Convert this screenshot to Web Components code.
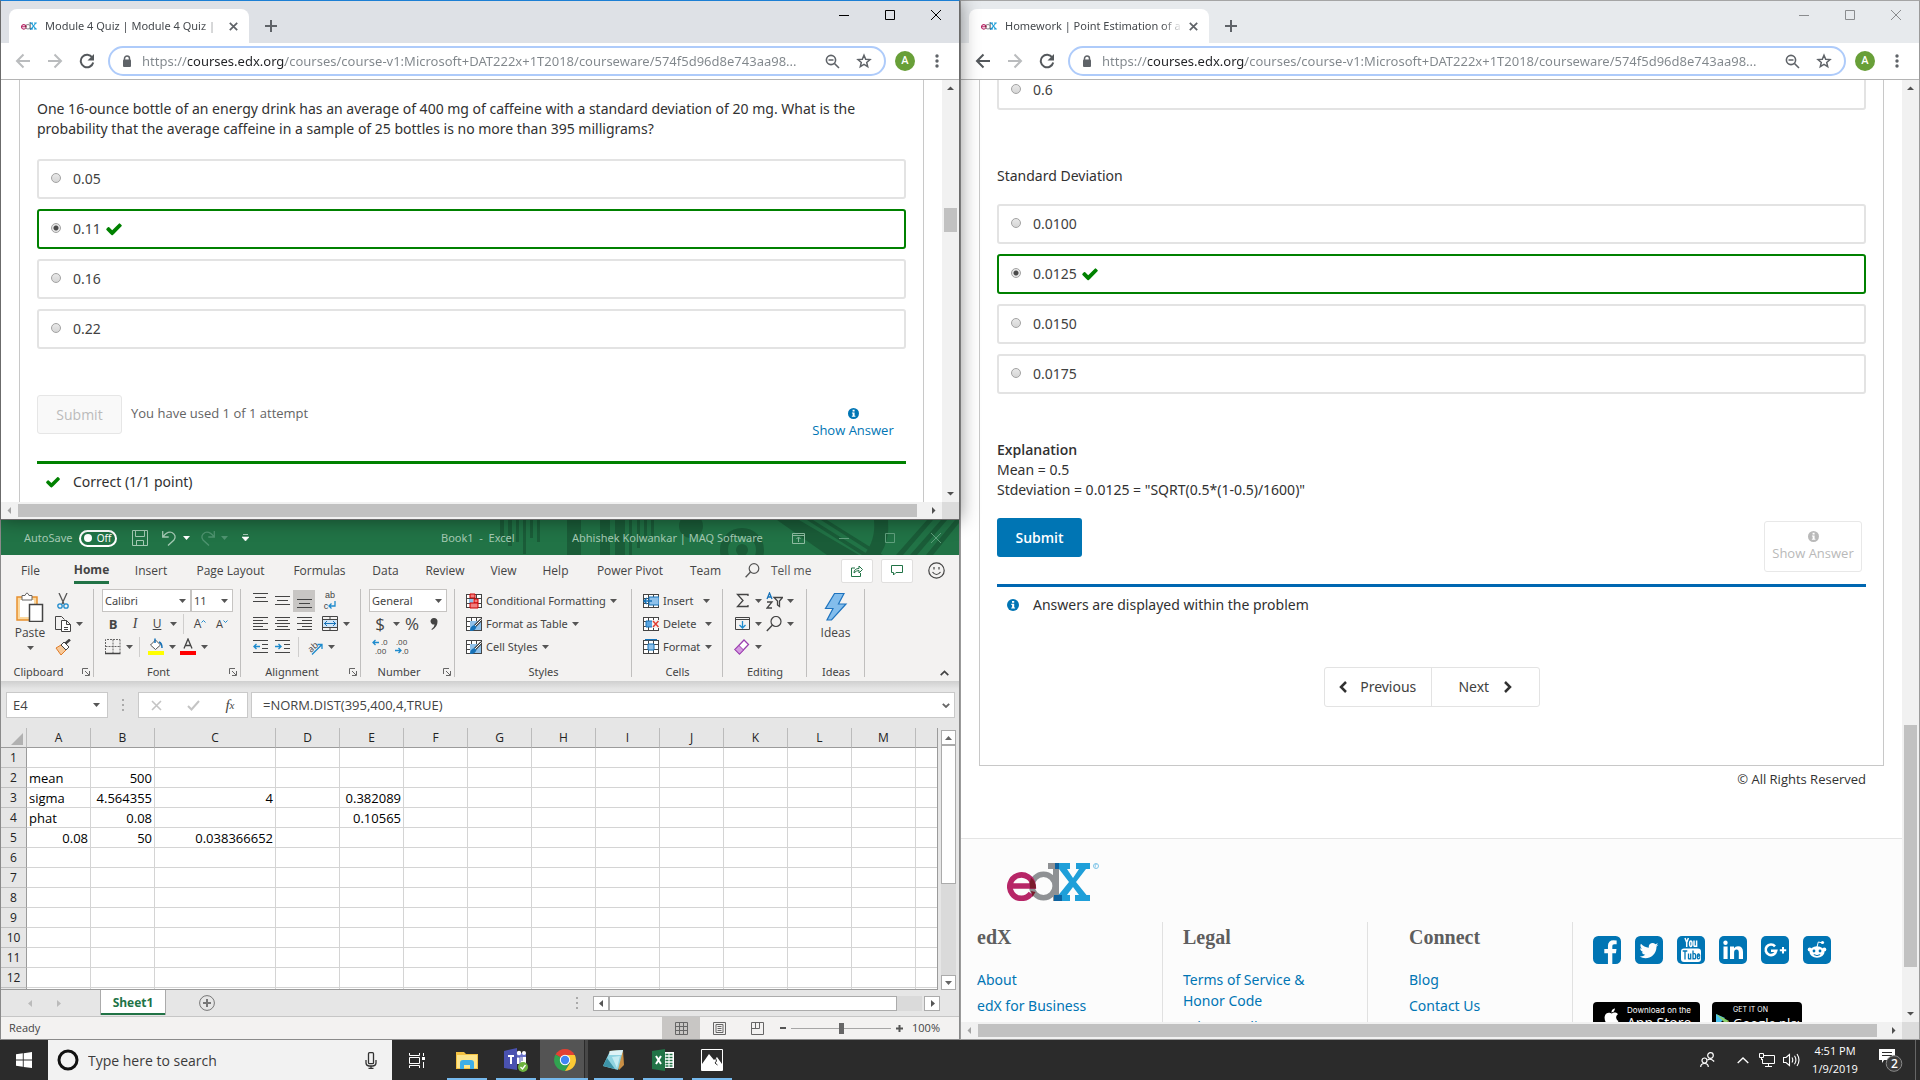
<!DOCTYPE html>
<html lang="en">
<head>
<meta charset="utf-8">
<title>Desktop</title>
<style>
html,body{margin:0;height:100%}
body{background:#1d3a52;font-family:"Open Sans","Noto Sans",sans-serif;overflow:hidden}
</style>
</head>
<body>
<desk-top>
  <chrome-window slot="nw" active heading="Module 4 Quiz | Module 4 Quiz |" vbar="111,24,253" hbar="0,899,8">
    <quiz-page></quiz-page>
  </chrome-window>
  <excel-window slot="sw"></excel-window>
  <chrome-window slot="e" canback heading="Homework | Point Estimation of a" vbar="628,242,38" hbar="0,899,8">
    <homework-page></homework-page>
  </chrome-window>
  <task-bar slot="bar"></task-bar>
</desk-top>
<script>
const svg = (w, h, body, extra = '') => `<svg width="${w}" height="${h}" viewBox="0 0 ${w} ${h}" fill="none" aria-hidden="true" ${extra}>${body}</svg>`;
const base = `<style>
*,:host{box-sizing:border-box}
:host{display:block;min-width:0}
button{font:inherit;color:inherit;border:0;background:none;padding:0;margin:0;display:flex;align-items:center;justify-content:center;flex:none}
input,select{font:inherit;color:inherit;margin:0;padding:0;border:0;background:none;outline:0;border-radius:0}
svg{display:block;flex:none}
a{text-decoration:none}
p,h2,h3,ul{margin:0;padding:0;list-style:none}
</style>`;
const define = (name, html) => customElements.define(name, class extends HTMLElement {
  connectedCallback() {
    if (this.shadowRoot) return;
    const t = document.createElement('template');
    t.innerHTML = base + (typeof html === 'function' ? html(this) : html);
    this.attachShadow({mode: 'open'}).append(t.content.cloneNode(true));
  }
});

const CHECK = 'M1671 566q0 40-28 68l-724 724-136 136q-28 28-68 28t-68-28l-136-136-362-362q-28-28-28-68t28-68l136-136q28-28 68-28t68 28l294 295 656-657q28-28 68-28t68 28l136 136q28 28 28 68z';
const check = s => `<svg width="${s}" height="${s}" viewBox="0 0 1792 1792" fill="#008100" aria-hidden="true"><path d="${CHECK}"/></svg>`;
const info = (s = 12) => `<svg width="${s}" height="${s}" viewBox="0 0 12 12" aria-hidden="true"><circle cx="6" cy="6" r="6" fill="currentColor"/><path d="M5 2h2.2v1.8H5zM4.3 4.8h2.9v3.6h.9v1.2H4.2V8.4h.9V6h-.8z" fill="#fff"/></svg>`;
const edx = (w, h, reg) => `<svg width="${w}" height="${h}" viewBox="0 0 ${reg ? 92 : 84} 38" fill="none" role="img" aria-label="edX">
<circle cx="36.5" cy="23" r="11.7" stroke="#8f9194" stroke-width="5.6"/>
<path d="M41 0h11v38h-6V6h-5z" fill="#8f9194"/>
<path d="M48 0h15v6h-3l6 9 6-9h-3V0h14v6h-4L69 19l10.500 13H83v6H68v-6h4l-6-8-6 8h3v6H47v-6h4.500L62 19 52 6h-4z" fill="#1f9fd9"/>
<path d="M48 0h4v6h-4zM47 32h8v6h-8z" fill="#0e63a0"/>
<path d="M3.500 23H26.200A11.700 11.700 0 1 0 24 30.500" stroke="#b72667" stroke-width="5.600"/>
<path d="M24 14.500q5 4 5 11H23q-1-6 1-11zM24 28l4.500 1-3 5z" fill="#7a1c2c"/>
${reg ? '<circle cx="89" cy="3" r="2.500" stroke="#7cc4e8"/><path d="M88.300 4.500v-3h1.400" stroke="#7cc4e8" stroke-width=".8"/>' : ''}</svg>`;

/* ---------- Desktop ---------- */
define('desk-top', `<style>
:host{height:100vh;display:grid;grid-template:1fr 1fr 40px / 1fr 1fr}
slot{display:block;min-width:0;min-height:0}
::slotted(*){height:100%}
slot[name=nw]{grid-area:1/1;z-index:3;box-shadow:0 0 18px rgba(0,0,0,.45)}
slot[name=sw]{grid-area:2/1;z-index:2}
slot[name=e]{grid-area:1/2/3/3}
slot[name=bar]{grid-area:3/1/4/3;z-index:4}
</style><slot name="nw"></slot><slot name="sw"></slot><slot name="e"></slot><slot name="bar"></slot>`);

/* ---------- Scroll bar of a browser page ---------- */
define('scroll-bar', el => {
  const v = el.hasAttribute('vertical');
  const [a, b, c] = el.getAttribute('parts').split(',');
  const tri = (d, f) => `<button aria-label="Scroll">${svg(7, 7, `<path d="${d}" fill="${f}"/>`)}</button>`;
  return `<style>
:host{display:flex;flex-direction:${v ? 'column' : 'row'};background:#f1f1f1;${v ? 'width' : 'height'}:17px}
button{width:17px;height:17px}
i{background:#c1c1c1;margin:${v ? '0 2px' : '2px 0'}}
</style>${v ? tri('M0 5h7L3.500 1.500z', '#505050') : tri('M5 0v7L1.500 3.500z', '#a3a3a3')}
<span style="flex:${a} 0 0"></span><i style="flex:${b} 0 0"></i><span style="flex:${c} 0 0"></span>
${v ? tri('M0 2h7L3.500 5.500z', '#505050') : tri('M2 0v7L5.500 3.500z', '#505050')}`;
});

/* ---------- Browser window ---------- */
define('chrome-window', el => {
  const on = el.hasAttribute('active');
  const back = el.hasAttribute('canback');
  const arrow = (c, d) => svg(16, 16, `<path d="${d}" stroke="${c}" stroke-width="2"/>`);
  return `<style>
:host{display:flex;flex-direction:column;background:#fff;border:1px solid ${on ? '#6b6b6b' : '#9b9b9b'};border-top-color:${on ? '#1c7fd4' : '#a5a5a5'}}
.title{height:42px;background:${on ? '#dee1e6' : '#e7eaed'};display:flex;padding:8px 0 0 8px;flex:none}
.tab{width:240px;height:34px;background:#fff;border-radius:8px 8px 0 0;display:flex;align-items:center;padding:0 11px 0 12px;color:#45494d;font:11px/18px "Noto Sans",sans-serif}
.tab b{font-weight:400;flex:1;margin:0 6px 0 8px;overflow:hidden;white-space:nowrap;-webkit-mask-image:linear-gradient(90deg,#000 88%,transparent)}
.plus{width:44px;height:34px}
.win{margin-left:auto;display:flex;margin-top:-8px;height:28px}
.win button{width:46px}
.tools{height:36px;display:flex;align-items:center;padding:0 6px;flex:none}
.tools>button{width:32px;height:32px}
.box{flex:1;height:30px;margin:0 9px 0 5px;border:2px solid #aecbfa;border-radius:15px;display:flex;align-items:center;padding:0 4px 0 12px}
.box input{flex:1;min-width:0;font:13px/20px "Noto Sans",sans-serif;margin-left:10px;color:#7b7f84;background:linear-gradient(90deg,#80868b 46px,#202124 46px 143px,#80868b 143px);-webkit-background-clip:text;background-clip:text;-webkit-text-fill-color:transparent}
.box button{width:32px;height:26px}
.tools .av{width:20px;height:20px;border-radius:50%;background:#689f38;color:#fff;font:500 11px/20px Roboto,sans-serif;margin-right:6px}
.page{flex:1;min-height:0;border-top:1px solid #b4b4b4;display:grid;grid-template:1fr 17px / 1fr 17px}
.view{overflow:hidden;min-height:0;min-width:0}
.corner{background:#dcdcdc}
</style>
<div class="title"><div class="tab">${edx(16, 8)}<b>${el.getAttribute('heading')}</b><button aria-label="Close tab">${svg(9, 9, '<path d="M.8.8l7.400 7.400M8.200.8L.8 8.200" stroke="#5f6368" stroke-width="1.700"/>')}</button></div>
<button class="plus" aria-label="New tab">${svg(12, 12, '<path d="M6 0v12M0 6h12" stroke="#5f6368" stroke-width="2"/>')}</button>
<div class="win" style="color:${on ? '#000' : '#8a8c8e'}"><button aria-label="Minimize">${svg(10, 10, '<path d="M0 5.500h10" stroke="currentColor"/>')}</button><button aria-label="Maximize">${svg(10, 10, '<path d="M.5.5h9v9h-9z" stroke="currentColor"/>')}</button><button aria-label="Close">${svg(10, 10, '<path d="M0 0l10 10M10 0L0 10" stroke="currentColor"/>')}</button></div></div>
<div class="tools">
<button aria-label="Back">${arrow(back ? '#54585c' : '#babcbe', 'M15 8H2.500M8.500 1.500L2 8l6.500 6.500')}</button>
<button aria-label="Forward">${arrow('#babcbe', 'M1 8h12.500M7.500 1.500L14 8l-6.500 6.500')}</button>
<button aria-label="Reload">${svg(16, 16, '<path d="M13.300 4.500A6.300 6.300 0 1 0 14.200 9.500" stroke="#54585c" stroke-width="2"/><path d="M15 1v6.500H8.500z" fill="#54585c"/>')}</button>
<div class="box">${svg(10, 13, '<path d="M2.500 6V3.500a2.500 2.500 0 0 1 5 0V6" stroke="#5f6368" stroke-width="1.500"/><rect x="1" y="4.500" width="8" height="7.500" rx="1" fill="#5f6368"/>')}
<input type="text" aria-label="Address" value="https://courses.edx.org/courses/course-v1:Microsoft+DAT222x+1T2018/courseware/574f5d96d8e743aa98...">
<button aria-label="Zoom">${svg(15, 15, '<circle cx="6" cy="6" r="4.600" stroke="#5f6368" stroke-width="1.600"/><path d="M3.500 6h5M9.500 9.500l4.500 4.500" stroke="#5f6368" stroke-width="1.600"/>')}</button>
<button aria-label="Bookmark">${svg(16, 16, '<path d="M8 2.200l1.700 4 4.300.4-3.300 2.800 1 4.200L8 11.400l-3.700 2.200 1-4.200L2 6.600l4.300-.4z" stroke="#5f6368" stroke-width="1.500"/>')}</button></div>
<button class="av" aria-label="Profile">A</button>
<button aria-label="Menu">${svg(4, 14, '<g fill="#5f6368"><circle cx="2" cy="2" r="1.700"/><circle cx="2" cy="7" r="1.700"/><circle cx="2" cy="12" r="1.700"/></g>')}</button></div>
<div class="page"><div class="view"><slot></slot></div><scroll-bar vertical parts="${el.getAttribute('vbar')}"></scroll-bar><scroll-bar parts="${el.getAttribute('hbar')}"></scroll-bar><div class="corner"></div></div>`;
});

/* ---------- Course page parts ---------- */
define('choice-item', el => {
  const on = el.hasAttribute('correct');
  return `<style>
label{display:flex;align-items:center;height:40px;border:2px solid ${on ? '#008100' : '#e3e3e3'};border-radius:3px;padding:0 12px;font-size:14px;line-height:20px;color:#414141}
input{appearance:none;width:10px;height:10px;border:1px solid #a2a2a2;border-radius:50%;background:${on ? 'radial-gradient(circle,#4a4a4a 2px,#e6e6e6 3px)' : 'linear-gradient(#e8e8e8,#d6d6d6)'};margin:0 12px 2px 0}
svg{margin-left:4px}
</style><label><input type="radio" name="c"${on ? ' checked' : ''}><slot></slot>${on ? check(18) : ''}</label>`;
});
define('submit-row', el => {
  const off = el.hasAttribute('used');
  return `<style>
:host{display:flex;align-items:flex-start;margin-bottom:12px;padding-right:4px;font-family:"Open Sans",sans-serif}
.s{width:85px;height:39px;border-radius:3px;font-size:14px;${off ? 'background:#f9f9f9;border:1px solid #e6e6e6;color:#bbb' : 'background:#0075b4;color:#fff;font-weight:600'}}
p{font-size:13px;line-height:20px;color:#646464;margin:8px 0 0 9px}
.a{margin:3px 0 0 auto;width:98px;height:51px;flex-direction:column;gap:2px;border-radius:3px;font-size:13px;line-height:18px;border:1px solid ${off ? 'transparent' : '#e8e8e8'};color:${off ? '#0075b4' : '#b9b9b9'}}
</style><button class="s"${off ? ' disabled' : ''}>Submit</button><p><slot></slot></p><button class="a">${info(11)}<span>Show Answer</span></button>`;
});
define('status-line', el => `<style>
:host{border-top:3px solid ${el.getAttribute('color')}}
p{display:flex;align-items:center;gap:12px;padding:8px 0 0 8px;font-size:14px;line-height:20px;color:#313131}
span{width:16px;display:grid;place-items:center;color:#0075b4}
</style><p><span>${el.hasAttribute('ok') ? check(16) : info(12)}</span><slot></slot></p>`);

define('quiz-page', `<style>
:host{height:100%;font-family:"Noto Sans",sans-serif}
section{margin:0 18px;height:100%;border:solid #c8c8c8;border-width:0 1px;padding:19px 17px 0;color:#313131;font-size:14px;line-height:20px}
.list{display:grid;gap:10px;margin:20px 0 46px}
submit-row{margin-bottom:12px}
</style><section>
<p>One 16-ounce bottle of an energy drink has an average of 400 mg of caffeine with a standard deviation of 20 mg. What is the probability that the average caffeine in a sample of 25 bottles is no more than 395 milligrams?</p>
<div class="list"><choice-item>0.05</choice-item><choice-item correct>0.11</choice-item><choice-item>0.16</choice-item><choice-item>0.22</choice-item></div>
<submit-row used>You have used 1 of 1 attempt</submit-row>
<status-line color="#008100" ok>Correct (1/1 point)</status-line>
</section>`);

define('homework-page', `<style>
:host{font-family:"Noto Sans",sans-serif}
section{margin:-10px 18px 0;border:1px solid #c8c8c8;border-top:0;padding:0 17px 58px;color:#313131;font-size:14px;line-height:20px}
.list{display:grid;gap:10px;margin:18px 0 46px}
h2{font-size:14px;font-weight:400;margin-top:56px}
b{font:600 14px "Open Sans",sans-serif}
submit-row{margin-top:18px}
nav{display:flex;width:216px;height:40px;margin:52px auto 0;border:1px solid #e3e3e3;border-radius:3px}
nav button{flex:1;gap:13px;color:#414141}
nav button+button{border-left:1px solid #e3e3e3;gap:15px}
.r{font:13px/20px "Open Sans",sans-serif;color:#313131;text-align:right;margin:3px 36px 49px 0}
</style><section>
<choice-item>0.6</choice-item>
<h2>Standard Deviation</h2>
<div class="list"><choice-item>0.0100</choice-item><choice-item correct>0.0125</choice-item><choice-item>0.0150</choice-item><choice-item>0.0175</choice-item></div>
<p><b>Explanation</b></p><p>Mean = 0.5</p><p>Stdeviation = 0.0125 = "SQRT(0.5*(1-0.5)/1600)"</p>
<submit-row></submit-row>
<status-line color="#0067b1">Answers are displayed within the problem</status-line>
<nav><button>${svg(8, 12, '<path d="M7 1L2 6l5 5" stroke="#313131" stroke-width="2.500"/>')}Previous</button><button>Next${svg(8, 12, '<path d="M1 1l5 5-5 5" stroke="#313131" stroke-width="2.500"/>')}</button></nav>
</section>
<p class="r">© All Rights Reserved</p>
<edx-footer></edx-footer>`);

const SQ = 'M1664 416v960q0 119-84.500 203.500t-203.500 84.500h-960q-119 0-203.500-84.500t-84.500-203.500v-960q0-119 84.500-203.500t203.500-84.500h960q119 0 203.500 84.500t84.500 203.500z';
const fa = d => `<svg width="28" height="28" viewBox="128 128 1536 1536" fill="#0075b4" fill-rule="evenodd" aria-hidden="true"><path d="${d}"/></svg>`;
const soc = body => svg(28, 28, `<rect width="28" height="28" rx="5" fill="#0075b4"/>${body}`);
const FB = 'M1376 128q119 0 203.5 84.5t84.5 203.5v960q0 119-84.5 203.5t-203.5 84.5h-188v-595h199l30-232h-229v-148q0-56 23.5-84t91.5-28l122-1v-207q-63-9-178-9-136 0-217.5 80t-81.5 226v171h-200v232h200v595h-532q-119 0-203.5-84.5t-84.5-203.5v-960q0-119 84.5-203.5t203.5-84.5h960z';
const TW = 'M1408 610q-56 25-121 34 68-40 93-117-65 38-134 51-61-66-153-66-87 0-148.5 61.5t-61.5 148.5q0 29 5 48-129-7-242-65t-192-155q-29 50-29 106 0 114 91 175-47-1-100-26v2q0 75 50 133.5t123 72.5q-29 8-51 8-13 0-39-4 21 63 74.5 104t121.5 42q-116 90-261 90-26 0-50-3 148 94 322 94 112 0 210-35.5t168-95 120.5-137 75-162 24.5-168.5q0-18-1-27 63-45 105-109z' + SQ;
const APPLE = 'M12.152 6.896c-.948 0-2.415-1.078-3.96-1.04-2.04.027-3.91 1.183-4.961 3.014-2.117 3.675-.546 9.103 1.519 12.09 1.013 1.454 2.208 3.09 3.792 3.039 1.52-.065 2.09-.987 3.935-.987 1.831 0 2.35.987 3.96.948 1.637-.026 2.676-1.48 3.676-2.948 1.156-1.688 1.636-3.325 1.662-3.415-.039-.013-3.182-1.221-3.22-4.857-.026-3.04 2.48-4.494 2.597-4.559-1.429-2.09-3.623-2.324-4.39-2.376-2-.156-3.675 1.09-4.61 1.09zM15.53 3.83c.843-1.012 1.4-2.427 1.245-3.83-1.207.052-2.662.805-3.532 1.818-.78.896-1.454 2.338-1.273 3.714 1.338.104 2.715-.688 3.559-1.701';
define('edx-footer', `<style>
footer{border-top:1px solid #e4e4e4;background:#fcfcfc;padding-top:24px}
.logo{display:block;padding-left:46px;margin-bottom:21px}
.cols{display:grid;grid-template-columns:202px 205px 205px 1fr;height:150px}
.cols>div{padding:3px 20px 0 41px;border-right:1px solid #e1e1e1}
.cols>div:nth-child(1){padding-left:16px}.cols>div:nth-child(2){padding-left:20px}
.cols>div:last-child{border:0;padding:14px 0 0 20px}
h3{font:bold 20px/24px "Liberation Serif",serif;color:#5e5e5e;margin-bottom:20px}
ul{display:grid;gap:5px;font-size:14px;line-height:21px}
li a{color:#0075b4}
.soc,.st{display:flex;gap:14px}
.st{gap:12px;margin-top:38px}
.st a{height:31px;border-radius:4px;background:#000;color:#fff;display:flex;gap:7px;padding:3px 0 0 10px;font:8px/10px Inter,sans-serif;white-space:nowrap}
.st a span{display:block}
.st a b{display:block;font:500 14px/16px "Open Sans",sans-serif}
</style><footer><a class="logo" href="#">${edx(92, 38, true)}</a><div class="cols">
<div><h3>edX</h3><ul><li><a href="#">About</a></li><li><a href="#">edX for Business</a></li></ul></div>
<div><h3>Legal</h3><ul><li><a href="#">Terms of Service &amp; Honor Code</a></li><li><a href="#">Privacy Policy</a></li></ul></div>
<div><h3>Connect</h3><ul><li><a href="#">Blog</a></li><li><a href="#">Contact Us</a></li></ul></div>
<div><div class="soc"><a href="#" aria-label="Facebook">${fa(FB)}</a><a href="#" aria-label="Twitter">${fa(TW)}</a>
<a href="#" aria-label="YouTube">${soc('<rect x="4" y="12.500" width="20" height="13.500" rx="3" fill="#fff"/><g fill="none" stroke-width="1.500"><path d="M8 2l1.700 4.500L11.400 2M9.700 6v5" stroke="#fff"/><ellipse cx="13.800" cy="7.700" rx="1.200" ry="2.700" stroke="#fff"/><path d="M17 4.500v5.300q.8 1.200 2.600-.3M19.600 4.500V11" stroke="#fff"/><path d="M5.700 15h4.600M8 15v8.500M11.500 17.500v5q.8 1 2.200-.2M13.700 17.500v6M16 14.500v9M16 18q2.600-1.200 2.600 1.500v2.500q-.5 1.500-2.600.3M22.600 21.200v.8q-1.400 1.800-2.200 0v-3q1.100-2 2.200 0v1h-2" stroke="#0075b4" stroke-width="1.300"/></g>')}</a>
<a href="#" aria-label="LinkedIn">${soc('<circle cx="6.500" cy="6.700" r="2.200" fill="#fff"/><path d="M4.500 10.500h4.100V23H4.500zM11 10.500h4v1.700q1.200-2 4-2 5 0 5 5.800v7h-4.200v-6.500q0-3-2.200-3-2.500 0-2.500 3V23H11z" fill="#fff"/>')}</a>
<a href="#" aria-label="Google Plus">${soc('<path d="M14 10.300A5.300 5.300 0 1 0 15.200 14.800H10" stroke="#fff" stroke-width="2.600"/><path d="M22 11v6.400M18.800 14.200h6.400" stroke="#fff" stroke-width="2"/>')}</a>
<a href="#" aria-label="Reddit">${soc('<g fill="#fff"><ellipse cx="14" cy="16" rx="7.500" ry="5.800"/><circle cx="6.700" cy="13.500" r="2"/><circle cx="21.300" cy="13.500" r="2"/><circle cx="19.500" cy="6.500" r="1.600"/></g><path d="M14 11l1.300-5 4 .8" stroke="#fff"/><circle cx="11" cy="15" r="1.400" fill="#0075b4"/><circle cx="17" cy="15" r="1.400" fill="#0075b4"/><path d="M10.800 18.600q3.200 2 6.400 0" stroke="#0075b4"/>')}</a></div>
<div class="st"><a href="#" style="width:107px"><svg width="17" height="20" viewBox="0 0 24 24" fill="#fff" aria-hidden="true" style="margin-top:2px"><path d="${APPLE}"/></svg><span>Download on the<b>App Store</b></span></a>
<a href="#" style="width:90px;padding-left:4px;gap:4px">${svg(13, 18, '<path d="M0 9l9 4-9 9z" fill="#4bc4f0"/><path d="M0 9l13 7-4 2z" fill="#8bd06a"/><path d="M13 16l-6 3 3 2z" fill="#f8c647"/>')}<span><span style="font-size:7px">GET IT ON</span><b style="font-size:13px">Google play</b></span></a></div></div>
</div></footer>`);

/* ---------- Spreadsheet ---------- */
const caret = (c = '#555') => svg(7, 4, `<path d="M0 0h7L3.500 4z" fill="${c}"/>`);
const G = '#444', B = '#1e8bcd';
const lines = (arr, w = 15) => svg(w, 15, arr.map(([x1, x2, y]) => `<path d="M${x1} ${y}.5H${x2}" stroke="${G}"/>`).join(''));
const al = m => lines([[0, 15, 1], [m[0], m[1], 4], [0, 15, 7], [m[0], m[1], 10], [0, 15, 13]]);
const ind = d => svg(15, 15, `<path d="M0 1.500h15M9 5.500h6M9 9.500h6M0 13.500h15" stroke="${G}"/><path d="${d}" stroke="${B}" stroke-width="1.400"/>`);
const tbl = x => svg(16, 16, `<rect x=".5" y="1.500" width="15" height="13" fill="#fff" stroke="${G}"/><path d="M5.500 1v14M10.500 1v14M0 5.500h16M0 10.500h16" stroke="${G}"/>${x}`);
const brush = `<path d="M4 5h11v9H4z" fill="#8fc1ea"/><path d="M15.500 3.500L9 10" stroke="${G}" stroke-width="3"/><path d="M15.500 3.500L9 10" stroke="#fff"/><path d="M4 15q0-5 4.500-6l2 2Q9 15.500 4 15z" fill="#1672b8"/>`;
const launch = svg(8, 8, `<path d="M.5 6V.5H6M3 3l4 4M7.500 3v4.500H3" stroke="#666"/>`);

define('ribbon-group', el => `<style>
:host{flex:none;width:${el.getAttribute('w')}px;display:flex;flex-direction:column;position:relative;padding-top:1px}
:host::after{content:"";position:absolute;right:0;top:1px;bottom:4px;width:1px;background:#c0bfbe}
.c{height:72px}
.t{display:flex;align-items:center;font:11px/20px "Noto Sans",sans-serif;height:20px;margin-top:4px;color:#444}
.t span{flex:1;text-align:center}.t button{width:18px;height:20px;padding-left:2px}
</style><div class="c"><slot></slot></div><div class="t"><span>${el.getAttribute('label')}</span>${el.hasAttribute('more') ? `<button aria-label="${el.getAttribute('label')} settings">${launch}</button>` : ''}</div>`);

define('excel-ribbon', `<style>
:host{display:flex;height:93px;background:#f3f2f1;color:#444;font-size:12px;position:relative;overflow:hidden}
.row{display:flex;height:23px;align-items:center}
.row>button{width:22px;height:22px}
.row>button.c,.c{width:10px;height:22px}
.row>i{width:1px;height:20px;background:#cfcecd;margin:0 5px}
.pad{padding-left:8px}
.on{background:#c8c6c4}
.sel{display:grid;height:23px;background:#fff;border:1px solid #c6c4c2;align-items:center}
.sel>*{grid-area:1/1}
.sel select{appearance:none;padding-left:2px;height:20px;width:100%;font:11px "Noto Sans",sans-serif}
.sel svg{justify-self:end;margin-right:4px;pointer-events:none}
.big{flex-direction:column;justify-content:flex-start;width:44px;height:69px;padding-top:3px}
.big span{line-height:16px;margin:3px 0 5px}
.row.txt>button{width:auto;gap:4px;padding-left:11px;font:11px/20px "Noto Sans",sans-serif}
.g{font:700 13px/20px "Open Sans",sans-serif}
.clip{display:flex;padding-left:7px}
.wrap{flex-direction:column;font:9px/11px "Liberation Sans",sans-serif}
.wrap span{display:flex;height:11px}
.fold{position:absolute;right:8px;bottom:1px;width:14px;height:14px}
</style>
<ribbon-group w="93" label="Clipboard" more><div class="clip"><button class="big">${svg(30, 30, `<path d="M2 5h20v23H2z" fill="#fbd9a0" stroke="#e8902e" stroke-width="1.500"/><path d="M5 8h14v17H5z" fill="#fff"/><path d="M7 3.500h3q2-5 4 0h3V8H7z" fill="#fff" stroke="#666"/><path d="M14.500 12.500h13v17h-13z" fill="#fff" stroke="#444" stroke-width="1.500"/>`)}<span>Paste</span>${caret()}</button>
<div><div class="row"><button aria-label="Cut">${svg(12, 16, `<path d="M2 0l5 11M10 0L5 11" stroke="#555" stroke-width="1.300"/><circle cx="3" cy="13" r="2.200" stroke="${B}" stroke-width="1.300"/><circle cx="9" cy="13" r="2.200" stroke="${B}" stroke-width="1.300"/>`)}</button></div>
<div class="row"><button aria-label="Copy">${svg(16, 16, '<path d="M6 13.500H.5V.5h6l3 3" stroke="#444"/><path d="M6.500 4.500h5l4 4v7h-9zM11.500 4.500v4h4M9 11.500h4M9 13.500h4" stroke="#444" fill="#fff"/>')}</button><button class="c" aria-label="Copy options">${caret()}</button></div>
<div class="row"><button aria-label="Format painter">${svg(16, 16, '<path d="M1 9l5-3 5 5-5 5z" fill="#f6c99a" stroke="#e07c28"/><path d="M6 6l3-3 5 5-3 3z" fill="#fff" stroke="#444"/><path d="M10.500 4.500L15 .5" stroke="#444" stroke-width="2.500"/>')}</button></div></div></div></ribbon-group>
<ribbon-group w="147" label="Font" more><div class="pad">
<div class="row"><span class="sel" style="width:89px"><select aria-label="Font"><option>Calibri</option></select>${caret()}</span><span class="sel" style="width:42px"><select aria-label="Font size"><option>11</option></select>${caret()}</span></div>
<div class="row"><button class="g">B</button><button class="g" style="font:italic 14px 'Liberation Serif',serif">I</button><button style="text-decoration:underline">U</button><button class="c" aria-label="Underline options">${caret()}</button><i></i><button aria-label="Grow font">A${svg(5, 10, `<path d="M.5 3.500l2-2 2 2" stroke="${B}"/>`)}</button><button aria-label="Shrink font" style="font-size:11px">A${svg(5, 10, `<path d="M.5 1.500l2 2 2-2" stroke="${B}"/>`)}</button></div>
<div class="row"><button aria-label="Borders">${svg(16, 16, '<path d="M.5 14V.5H15M8 .5V14M.5 7.500H15M15 .5V14" stroke="#666" stroke-dasharray="2 1"/><path d="M0 14.500h15.500" stroke="#444" stroke-width="1.500"/>')}</button><button class="c" aria-label="Border options">${caret()}</button><i></i>
<button aria-label="Fill color">${svg(16, 17, `<path d="M2.500 7l5-5 5 5-5 4.500z" stroke="#555" fill="#fff"/><path d="M7 5V.5M11 4q3 1 3 6" stroke="#1672b8" stroke-width="1.500"/><path d="M0 13h16v4H0z" fill="#ff0"/>`)}</button><button class="c" aria-label="Fill options">${caret()}</button>
<button aria-label="Font color">${svg(16, 17, '<path d="M4 10.500L8 1l4 9.500M5.500 7.500h5" stroke="#444" stroke-width="1.300"/><path d="M0 13h16v4H0z" fill="red"/>')}</button><button class="c" aria-label="Font color options">${caret()}</button></div></div></ribbon-group>
<ribbon-group w="120" label="Alignment" more><div class="pad">
<div class="row"><button aria-label="Top align">${lines([[0, 15, 0], [2, 13, 4], [0, 15, 8]])}</button><button aria-label="Middle align">${lines([[0, 15, 3], [2, 13, 7], [0, 15, 11]])}</button><button class="on" aria-label="Bottom align">${lines([[0, 15, 6], [2, 13, 10], [0, 15, 14]])}</button><button class="wrap" aria-label="Wrap text" style="margin-left:4px"><span>ab</span><span>c${svg(8, 10, `<path d="M7 0v5H1M3.500 2.500L1 5l2.500 2.500" stroke="${B}" stroke-width="1.300"/>`)}</span></button></div>
<div class="row"><button aria-label="Align left">${al([0, 10])}</button><button aria-label="Center">${al([2, 13])}</button><button aria-label="Align right">${al([5, 15])}</button><button aria-label="Merge" style="margin-left:4px">${svg(16, 15, `<path d="M.5.5h15v14H.5zM8 .5V4M8 11v3.500M.5 3.500h15M.5 11.500h15" stroke="${G}"/><path d="M1 4h14v7H1z" fill="#cfe5f7"/><path d="M2 7.500h12M5 5L2.500 7.500 5 10M11 5l2.500 2.500L11 10" stroke="#1672b8"/>`)}</button><button class="c" aria-label="Merge options">${caret()}</button></div>
<div class="row"><button aria-label="Decrease indent">${ind('M7 7.500H1M3.500 5L1 7.500 3.500 10')}</button><button aria-label="Increase indent">${ind('M0 7.500h6M3.500 5L6 7.500 3.500 10')}</button><i></i><button aria-label="Orientation">${svg(20, 20, `<text x="3" y="14" font-size="9" fill="#444" transform="rotate(-42 7 11)">ab</text><path d="M7 17.500L16.500 8M12.500 7.500H17V12" stroke="${B}" stroke-width="1.300"/>`)}</button><button class="c" aria-label="Orientation options">${caret()}</button></div></div></ribbon-group>
<ribbon-group w="94" label="Number" more><div class="pad">
<div class="row"><span class="sel" style="width:78px"><select aria-label="Number format"><option>General</option></select>${caret()}</span></div>
<div class="row" style="font-size:17px"><button>$</button><button class="c" aria-label="Currency options">${caret()}</button><button>%</button><button aria-label="Comma style">${svg(8, 14, '<path d="M4 1a3.400 3.400 0 0 1 3.500 3.800Q7.500 10 2 13l-.6-.8Q4.500 10 4.600 7.500A3.300 3.300 0 1 1 4 1z" fill="#444"/>')}</button></div>
<div class="row"><button aria-label="Increase decimal">${svg(17, 19, `<path d="M7 5.500H1M3.500 3L1 5.500 3.500 8" stroke="${B}" stroke-width="1.300"/><g font-size="8" fill="#444"><text x="9" y="8">.0</text><text x="3" y="17">.00</text></g>`)}</button><button aria-label="Decrease decimal">${svg(17, 19, `<path d="M1 13.500h6M4.500 11L7 13.500 4.500 16" stroke="${B}" stroke-width="1.300"/><g font-size="8" fill="#444"><text x="2" y="8">.00</text><text x="8" y="17">.0</text></g>`)}</button></div></div></ribbon-group>
<ribbon-group w="177" label="Styles"><div>
<div class="row txt"><button>${tbl('<path d="M4 1h5v4H4zM8 6h4v4H8z" fill="#f08080" stroke="#c00"/><path d="M3 6h4v4H3z" fill="#8fc1ea"/><path d="M4 10h8v5H4z" fill="#f08080" stroke="#c00"/>')}Conditional Formatting ${caret()}</button></div>
<div class="row txt"><button>${tbl(brush)}Format as Table ${caret()}</button></div>
<div class="row txt"><button>${tbl(brush)}Cell Styles ${caret()}</button></div></div></ribbon-group>
<ribbon-group w="91" label="Cells"><div>
<div class="row txt"><button>${tbl(`<path d="M6 4h10v8H6z" fill="#8fc1ea" stroke="#1672b8"/><path d="M9 8H1M4 5L1 8l3 3" stroke="#1672b8" stroke-width="1.500"/>`)}<span style="width:36px;text-align:left">Insert</span>${caret()}</button></div>
<div class="row txt"><button>${tbl('<path d="M3 5h7v6H3z" fill="#5ba5e0" stroke="#1672b8"/><path d="M9 4h7v8H9z" fill="#f3f2f1"/><path d="M10 5l5.500 6M15.500 5L10 11" stroke="#e03c31" stroke-width="1.500"/>')}<span style="width:38px;text-align:left">Delete</span>${caret()}</button></div>
<div class="row txt"><button>${tbl('<path d="M5 5h6v6H5z" fill="#8fc1ea" stroke="#1672b8"/><path d="M2 .5h12" stroke="#1672b8" stroke-width="1.500"/>')}<span style="width:38px;text-align:left">Format</span>${caret()}</button></div></div></ribbon-group>
<ribbon-group w="84" label="Editing"><div class="pad">
<div class="row"><button aria-label="AutoSum">${svg(13, 15, '<path d="M12 3V1.500H1.500L7 7.500 1.500 13.500H12V12" stroke="#444" stroke-width="1.300"/>')}</button><button class="c" aria-label="AutoSum options">${caret()}</button><button aria-label="Sort and filter">${svg(17, 17, '<path d="M1 7l2.500-6L6 7M2 5h3" stroke="#1672b8" stroke-width="1.300"/><path d="M1 10h5l-5 6h5" stroke="#444" stroke-width="1.300"/><path d="M8 5.500h8.500L13.500 9v5.500l-2-1.500V9z" stroke="#444" stroke-width="1.300"/>')}</button><button class="c" aria-label="Sort options">${caret()}</button></div>
<div class="row"><button aria-label="Fill">${svg(15, 15, `<path d="M.5 1.500h14v12H.5zM.5 3.500h14" stroke="#444"/><path d="M7.500 5v7M4.500 9l3 3 3-3" stroke="${B}" stroke-width="1.300"/>`)}</button><button class="c" aria-label="Fill options">${caret()}</button><button aria-label="Find">${svg(16, 16, '<circle cx="10" cy="5.500" r="5" stroke="#444" stroke-width="1.200"/><path d="M6.500 9L.8 15" stroke="#444" stroke-width="1.400"/>')}</button><button class="c" aria-label="Find options">${caret()}</button></div>
<div class="row"><button aria-label="Clear">${svg(16, 16, '<path d="M1 10.500L10 1l4.500 4.500-9 9.500z" fill="#fff" stroke="#9b3fb0" stroke-width="1.300"/><path d="M1 10.500L5 6.500l4.500 4.500-4 4z" fill="#d59be0" stroke="#9b3fb0"/>')}</button><button class="c" aria-label="Clear options">${caret()}</button></div></div></ribbon-group>
<ribbon-group w="58" label="Ideas"><button class="big" style="width:57px">${svg(24, 30, '<path d="M10.500 1.500h9.500L14.500 12H22L7.500 28H3l6-11.500H1.500z" fill="#83bdec" stroke="#1e73be" stroke-width="1.200"/>')}<span>Ideas</span></button></ribbon-group>
<button class="fold" aria-label="Collapse ribbon">${svg(9, 6, '<path d="M.7 5.200L4.500 1.500l3.800 3.700" stroke="#444" stroke-width="1.700"/>')}</button>`);

const data = {2: {A: 'mean', B: '500'}, 3: {A: 'sigma', B: '4.564355', C: '4', E: '0.382089'}, 4: {A: 'phat', B: '0.08', E: '0.10565'}, 5: {A: '0.08', B: '50', C: '0.038366652'}};
const cols = [...'ABCDEFGHIJKLM'];
define('sheet-grid', `<style>
:host{display:flex;min-height:0;background:#e6e6e6;padding-right:3px}
.w{flex:1;min-width:0;overflow:hidden;border:solid #9b9b9b;border-width:0 0 1px;margin-right:3px}
table{width:100%;table-layout:fixed;border-collapse:separate;border-spacing:0;font-size:12px;line-height:18px;color:#000;border-right:1px solid #9b9b9b;background:#fff}
td,th{height:20px;padding:1px 0 0;border:solid #d4d4d4;border-width:0 1px 1px 0;overflow:hidden;white-space:nowrap}
td{font-size:13px;padding:1px 2px 0}
td.n{text-align:right}
th{font-weight:400;background:#e6e6e6;border-right-color:#9b9b9b;text-align:center;color:#222}
thead th{border-bottom-color:#9b9b9b;border-right-color:#bbb}
tbody th{border-bottom-color:#c0c0c0}
th svg{margin:2px 3px 0 auto}
.v{width:15px;display:flex;flex-direction:column;padding:2px 0 0}
.v button{width:15px;height:15px;background:#fff;border:1px solid #ababab}
.v i{flex:138 0 0;background:#fff;border:1px solid #ababab}.v span{flex:92 0 0;background:#dadada}
</style><div class="w"><table><colgroup><col style="width:26px">${cols.map(c => `<col style="width:${c === 'C' ? 121 : 64}px">`).join('')}<col></colgroup>
<thead><tr><th aria-label="Select all">${svg(12, 12, '<path d="M12 0v12H0z" fill="#b1b1b1"/>')}</th>${cols.map(c => `<th>${c}</th>`).join('')}<th style="border-right:0"></th></tr></thead>
<tbody>${Array.from({length: 13}, (_, i) => i + 1).map(r => `<tr><th>${r < 13 ? r : ''}</th>${cols.map(c => { const v = (data[r] || {})[c] || ''; return `<td${/^\d/.test(v) ? ' class="n"' : ''}>${v}</td>`; }).join('')}<td style="border-right:0"></td></tr>`).join('')}</tbody></table></div>
<div class="v"><button aria-label="Scroll up">${svg(7, 4, '<path d="M0 4h7L3.500 0z" fill="#666"/>')}</button><i></i><span></span><button aria-label="Scroll down">${caret('#666')}</button></div>`);

define('excel-window', `<style>
:host{display:flex;flex-direction:column;background:#e6e6e6;border:solid #8a8a8a;border-width:0 1px 1px;font-size:12px;color:#444;font-family:"Open Sans","Noto Sans",sans-serif}
.title{height:35px;background:#217346;color:#a5cab4;display:grid;grid-template-columns:440px 131px 1fr auto;align-items:center;flex:none;position:relative;padding-top:1px;white-space:nowrap;font:11px/16px "Noto Sans",sans-serif}
.title>.art{position:absolute;right:0;top:0}
.title>*{position:relative}
.q{display:flex;align-items:center;padding-left:23px}
.tg{width:38px;height:17px;border:2px solid #fff;border-radius:9px;color:#fff;font-size:10px;line-height:12px;margin:0 15px 0 7px;justify-content:space-between;padding:0 4px 0 3px}
.q .a{margin:0 6px}
.win{display:flex}.win button{width:46px;height:30px}
.tabs{height:33px;background:#f3f2f1;display:flex;align-items:center;padding:0 14px 2px 4px;flex:none}
.tabs nav{display:grid;grid-template-columns:51px 71px 48px 111px 67px 65px 54px 63px 41px 108px 43px;height:31px}
.tabs nav button{height:31px;white-space:nowrap}
.tabs .home{font-weight:700}
.home span{border-bottom:3px solid #217346;line-height:22px;padding-top:3px;margin-top:-1px}
.tell{display:flex;gap:11px;align-items:center;margin-left:18px;line-height:22px;white-space:nowrap;color:#555}
.sb{width:32px;height:24px;background:#fff;border:1px solid #e0dfde;border-radius:2px}
.bar{height:47px;flex:none;display:flex;align-items:center;padding:1px 4px 0 5px;background:linear-gradient(#cfcfcf,#e6e6e6 8px)}
.bar>div{height:26px;background:#fff;border:1px solid #c9c9c9;display:flex;align-items:center}
.bar input{font-size:13px;flex:1;min-width:0}
.nm{width:102px}.nm input{padding-left:6px}.nm svg{margin-right:7px}
.dots{width:30px;display:grid;justify-content:center}
.fb{width:110px;justify-content:space-around}
.fx{flex:1;margin-left:3px}.fx input{padding-left:11px}.fx svg{margin-right:4px}
sheet-grid{flex:1}
.foot{height:27px;flex:none;display:flex;align-items:center;border-bottom:1px solid #c6c6c6}
.foot .n{width:28px;height:20px}
.foot .t{width:66px;height:25px;align-self:flex-start;background:#fff;border:solid #ababab;border-width:0 1px 0;box-shadow:inset 0 -2px #217346;color:#217346;font-weight:700;margin:0 33px 0 28px}
.hs{width:347px;display:flex;align-items:center;height:15px;margin:0 19px 0 15px}
.hs button{width:16px;height:15px;background:#fff;border:1px solid #ababab}
.hs i{flex:290 0 0;height:15px;background:#fff;border:1px solid #ababab}.hs span{flex:25 0 0;height:15px;background:#dadada;margin-right:2px}
.stat{height:22px;flex:none;background:#f3f2f1;display:flex;align-items:center;padding:0 19px 0 8px;font-size:11px;line-height:18px}
.stat>b{font-weight:400;margin-right:auto}
.stat .vw{width:38px;height:22px}
.stat .vw.on{background:#c8c6c4}
.stat .z{width:14px;height:20px}
input[type=range]{appearance:none;width:100px;height:12px;margin:0 1px;background:linear-gradient(#a6a6a6,#a6a6a6) 0 50%/100% 1px no-repeat}
input[type=range]::-webkit-slider-thumb{appearance:none;width:5px;height:11px;background:#666}
output{width:34px;text-align:right}
</style>
<div class="title">${svg(470, 35, `<g fill="#1a5c38"><path d="M11 0h4v18h-4zM19 0h4v26h-4zM27 0h3v22h-3zM34 0h3v34h-3zM41 0h3v18h-3zM48 0h3v22h-3zM78 0h14v35H78zM111 0h10v35h-10zM126 0h10v35h-10zM140 0h3v35h-3zM148 0h3v28h-3zM155 0h3v20h-3zM162 0h3v16h-3z"/><circle cx="202" cy="6" r="12"/><path d="M288 0h22l60 35h-32z"/><path d="M318 0h6l56 35h-7zM332 0h6l56 35h-7z"/><path d="M385 0h14q2 20-8 35h-16q12-15 10-35zM438 0h6l-30 35h-7zM452 0h6l-30 35h-7zM466 0h4v3l-26 32h-7z"/></g><circle cx="253" cy="30" r="18" stroke="#1a5c38" stroke-width="8"/><circle cx="253" cy="30" r="6" fill="#1a5c38"/>`, 'class="art"')}
<div class="q"><span>AutoSave</span><button class="tg" role="switch" aria-checked="false">${svg(8, 8, '<circle cx="4" cy="4" r="4" fill="#fff"/>')}Off</button>
<button aria-label="Save">${svg(16, 16, '<path d="M.5.5h15v15h-15zM3.500.5v6h9v-6M4.500 15.500v-5h7v5" stroke="#a5cab4"/>')}</button>
<button aria-label="Undo" style="margin-left:14px">${svg(15, 16, '<path d="M.7 1v6h6M1 7Q5 1 10 2.500q5 3 2 7.500L6 15.500" stroke="#a5cab4" stroke-width="1.300"/>')}</button><button class="a" aria-label="Undo options" style="margin-right:0">${caret('#fff')}</button>
<button aria-label="Redo" style="margin-left:10px">${svg(15, 16, '<path d="M14.300 1v6h-6M14 7q-4-6-9-4.500Q0 5.500 3 10l6 5.500" stroke="#4f9470" stroke-width="1.300"/>')}</button><button class="a" aria-label="Redo options" style="margin-right:0">${caret('#4f9470')}</button>
<button aria-label="Customize" style="margin-left:14px">${svg(7, 8, '<path d="M1 .5h5M0 3h7L3.500 7z" stroke="#fff" fill="#fff" stroke-width=".6"/>')}</button></div>
<span>Book1&nbsp; -&nbsp; Excel</span><span>Abhishek Kolwankar | MAQ Software</span>
<div class="win"><button aria-label="Ribbon options">${svg(13, 11, '<path d="M.5.5h12v10H.5zM.5 2.500h12M6.500 9V4.500M4.500 6l2-2 2 2" stroke="#8dbba0"/>')}</button><button aria-label="Minimize">${svg(10, 10, '<path d="M0 5.500h10" stroke="#5f9f7c"/>')}</button><button aria-label="Maximize">${svg(10, 10, '<path d="M.5.5h9v9h-9z" stroke="#5f9f7c"/>')}</button><button aria-label="Close">${svg(10, 10, '<path d="M0 0l10 10M10 0L0 10" stroke="#5f9f7c"/>')}</button></div></div>
<div class="tabs"><nav>${['File', 'Home', 'Insert', 'Page Layout', 'Formulas', 'Data', 'Review', 'View', 'Help', 'Power Pivot', 'Team'].map(t => `<button${t === 'Home' ? ' class="home"' : ''}><span>${t}</span></button>`).join('')}</nav>
<label class="tell">${svg(15, 15, '<circle cx="9" cy="5.500" r="4.800" stroke="#555" stroke-width="1.200"/><path d="M5.500 9L.6 14.300" stroke="#555" stroke-width="1.300"/>')}Tell me</label>
<button class="sb" style="margin-left:auto" aria-label="Share">${svg(12, 12, '<path d="M4 3H.5v8.500h9V8M3 8q0-4.500 5-4.500V1l3.500 3.500L8 8V5.500Q5 5.500 3 8z" stroke="#217346"/>')}</button>
<button class="sb" style="margin:0 15px 0 8px" aria-label="Comments">${svg(12, 11, '<path d="M.5.5h11v7H5L2.500 10V7.500h-2z" stroke="#217346"/>')}</button>
<button aria-label="Feedback">${svg(17, 17, '<circle cx="8.500" cy="8.500" r="7.700" stroke="#444" stroke-width="1.200"/><path d="M6 5v2.500M11 5v2.500M4.500 10q4 5 8 0" stroke="#444" stroke-width="1.200"/>')}</button></div>
<excel-ribbon></excel-ribbon>
<div class="bar"><div class="nm"><input type="text" aria-label="Name box" value="E4">${caret()}</div><span class="dots">${svg(2, 12, '<path d="M0 1h2M0 6h2M0 11h2" stroke="#aaa" stroke-width="2"/>')}</span>
<div class="fb"><button aria-label="Cancel">${svg(11, 11, '<path d="M1 1l9 9M10 1l-9 9" stroke="#c4c4c4" stroke-width="1.600"/>')}</button><button aria-label="Enter">${svg(13, 11, '<path d="M1 6l3.500 3.500L12 1" stroke="#c4c4c4" stroke-width="2"/>')}</button><button aria-label="Insert function" style="font:italic 15px 'Liberation Serif',serif">f<small style="font-size:11px">x</small></button></div>
<div class="fx"><input type="text" aria-label="Formula" value="=NORM.DIST(395,400,4,TRUE)">${svg(8, 5, '<path d="M.8.8L4 4 7.200.8" stroke="#666" stroke-width="1.800"/>')}</div></div>
<sheet-grid></sheet-grid>
<div class="foot"><button class="n" aria-label="Previous sheet" style="margin-left:15px">${svg(5, 7, '<path d="M4 0v7L0 3.500z" fill="#bbb"/>')}</button><button class="n" aria-label="Next sheet">${svg(5, 7, '<path d="M1 0v7l4-3.500z" fill="#bbb"/>')}</button><button class="t">Sheet1</button>
<button aria-label="New sheet">${svg(16, 16, '<circle cx="8" cy="8" r="7.400" stroke="#777"/><path d="M8 4v8M4 8h8" stroke="#777" stroke-width="2"/>')}</button>
<span style="margin-left:auto">${svg(2, 12, '<path d="M0 1h2M0 6h2M0 11h2" stroke="#aaa" stroke-width="2"/>')}</span>
<div class="hs"><button aria-label="Scroll left">${svg(5, 7, '<path d="M4 0v7L0 3.500z" fill="#555"/>')}</button><i></i><span></span><button aria-label="Scroll right">${svg(5, 7, '<path d="M1 0v7l4-3.500z" fill="#555"/>')}</button></div></div>
<div class="stat"><b>Ready</b>
<button class="vw on" aria-label="Normal view">${svg(13, 13, '<path d="M.5.5h12v12H.5zM4.500.5v12M8.500.5v12M.5 4.500h12M.5 8.500h12" stroke="#666"/>')}</button>
<button class="vw" aria-label="Page layout">${svg(13, 13, '<path d="M.5.5h12v12H.5zM3 2.500h7v8H3zM4.500 4.500h4M4.500 6.500h4M4.500 8.500h4" stroke="#666"/>')}</button>
<button class="vw" aria-label="Page break">${svg(13, 13, '<path d="M.5.5h12v12H.5zM4.500.5v6M8.500.5v6M.5 6.500h8" stroke="#666"/>')}</button>
<button class="z" aria-label="Zoom out">${svg(6, 6, '<path d="M0 3h6" stroke="#555" stroke-width="2"/>')}</button><input type="range" aria-label="Zoom" value="50"><button class="z" aria-label="Zoom in">${svg(7, 7, '<path d="M0 3.500h7M3.500 0v7" stroke="#555" stroke-width="2"/>')}</button><output>100%</output></div>`);

/* ---------- Taskbar ---------- */
define('task-bar', `<style>
:host{display:flex;background:#2b2b2b;color:#fff;font-family:"Open Sans","Noto Sans",sans-serif}
button{height:40px}
.s{width:48px}
label{width:344px;background:#f2f2f2;display:flex;align-items:center;padding:0 15px 0 9px;color:#3b3b3b;flex:none}
label input{flex:1;min-width:0;font-size:14px;padding-left:9px}
label input::placeholder{color:#3b3b3b;opacity:1}
.tv{width:50px}
.app{width:49px;position:relative;padding-top:0}
.app::after{content:"";position:absolute;left:5px;right:4px;bottom:0;height:2px;background:#76b9ed}
.app.on{background:linear-gradient(90deg,#545454 44px,#2b2b2b 44px 45px,#484848 45px 48px,#2b2b2b 48px)}
.app.on::after{left:0;right:1px}
.tray{margin-left:auto;display:flex;align-items:center}
.tray button{width:24px}
.tray .clk{width:64px;font-size:11px;line-height:18px;text-align:center}
.tray .nt{width:48px}
.end{width:5px;height:40px;border-left:1px solid #666}
</style>
<button class="s" aria-label="Start">${svg(16, 16, '<path d="M0 2.300L6.800 1.300V7.600H0zM7.700 1.200L16 0v7.600H7.700zM0 8.500h6.800v6.300L0 13.800zM7.700 8.500H16V16l-8.300-1.100z" fill="#fff"/>')}</button>
<label>${svg(22, 22, '<circle cx="11" cy="11" r="9" stroke="#111" stroke-width="3"/>')}<input type="search" placeholder="Type here to search" aria-label="Search">${svg(12, 17, '<rect x="3.500" y=".7" width="5" height="11" rx="1" stroke="#333" stroke-width="1.300"/><path d="M1 8v3q0 2.500 3 3h4q3-.5 3-3V8M6 14v2.500M3.500 16.300h5" stroke="#333" stroke-width="1.300"/>')}</label>
<button class="tv" aria-label="Task view">${svg(16, 15, '<path d="M.5 0v2.500h10V0M.5 15v-2.500h10V15M.5 4.500h10v6H.5zM14.500 0v3M14.500 9v6" stroke="#fff"/><path d="M13 4h3v3h-3z" fill="#fff"/>')}</button>
<button class="app" aria-label="File Explorer">${svg(22, 18, '<path d="M0 1h8l2 2h12v15H0z" fill="#f5c242"/><path d="M1 4h20v13H1z" fill="#fde58c"/><path d="M4 18v-6q0-3 3-3h8q3 0 3 3v6h-4v-4H8v4z" fill="#3eaee8"/>')}</button>
<button class="app" aria-label="Teams">${svg(24, 24, '<path d="M0 3l13-3v22L0 20z" fill="#4a52b0"/><path d="M13 5h9v11h-9z" fill="#6870c8"/><circle cx="15" cy="5" r="2.200" fill="#fff"/><circle cx="20" cy="5" r="2" fill="#fff"/><path d="M13 9h9v7h-9z" fill="#fff"/><path d="M13 9h3v7M18 9v4" stroke="#4a52b0"/><path d="M4 8h6M7 8v8" stroke="#fff" stroke-width="2"/><circle cx="19" cy="19" r="5" fill="#6db33f"/><path d="M16.500 19l2 2 3-4" stroke="#fff" stroke-width="1.300"/>')}</button>
<button class="app on" aria-label="Chrome">${svg(22, 22, '<path d="M11 11L1.500 5.500A11 11 0 0 1 20.500 5.500z" fill="#e34133"/><path d="M11 11L1.500 5.500A11 11 0 0 0 11 22l5-9z" fill="#31a350"/><path d="M11 6h9.800A11 11 0 0 1 11 22l5-8z" fill="#fcc934"/><circle cx="11" cy="11" r="5.200" fill="#fff"/><circle cx="11" cy="11" r="4.200" fill="#4285f4"/>')}</button>
<button class="app" aria-label="Notepad">${svg(22, 22, '<path d="M6 2l14-1 1 15-5 5z" fill="#c98f45"/><path d="M7 2l13-1-5 20L0 17z" fill="#8fd3e0"/><path d="M7 2l13-1-1.500 5L6 6z" fill="#dff3f6"/><path d="M0 17L4 9l8 11z" fill="#3d94a8"/><path d="M9 8l8-1-3 12z" fill="#c4ebf1"/>')}</button>
<button class="app" aria-label="Excel">${svg(22, 22, '<path d="M12 3h10v16H12z" fill="#fff"/><path d="M13.500 5.500h7M13.500 8.500h7M13.500 11.500h7M13.500 14.500h7M13.500 17h7" stroke="#217346" stroke-width="1.600"/><path d="M17 4v14" stroke="#fff"/><path d="M0 2l13-2v22L0 20z" fill="#217346"/><path d="M4 7l5 8M9 7l-5 8" stroke="#fff" stroke-width="2"/>')}</button>
<button class="app" aria-label="Photos">${svg(22, 22, '<path d="M.5.5h21v21H.5z" stroke="#fff"/><path d="M1 15l7-10 5 6 3-3 5 7v6H1z" fill="#fff"/><path d="M14.500 9l1 3-1.500 2 2.500 2" stroke="#2b2b2b"/>')}</button>
<div class="tray"><button aria-label="People" style="width:48px">${svg(15, 16, '<circle cx="10.500" cy="3.500" r="2.800" stroke="#fff" stroke-width="1.200"/><circle cx="4.500" cy="8.500" r="2.500" stroke="#fff" stroke-width="1.200"/><path d="M.7 15q0-3.500 3.800-3.500T8.300 15M7.500 8q3-2.500 6.700 1.500" stroke="#fff" stroke-width="1.200"/>')}</button>
<button aria-label="Hidden icons">${svg(12, 7, '<path d="M.7 6L6 1l5.300 5" stroke="#fff" stroke-width="1.300"/>')}</button>
<button aria-label="Network">${svg(16, 14, '<path d="M5 2.500h10.500v8H3.500V6M9.500 10.500v3M6 13.500h7M.5.5h4v4h-4zM2.500 4.500V7" stroke="#fff"/>')}</button>
<button aria-label="Volume">${svg(17, 14, '<path d="M.5 4.500H3L6.500 1.500v11L3 9.500H.5zM9 4.500q1.500 2.500 0 5M11.500 2.800q2.800 4.200 0 8.400M14 1q4 6 0 12" stroke="#fff" stroke-width="1.100"/>')}</button>
<button class="clk"><span>4:51 PM<br>1/9/2019</span></button>
<button class="nt" aria-label="2 new notifications">${svg(26, 24, '<path d="M1 1h16v11H6l-2 3v-3H1z" fill="#fff"/><path d="M4 4.500h10M4 7.500h10" stroke="#2b2b2b"/><circle cx="16" cy="15.500" r="7.800" fill="#3b3b3b" stroke="#8a8a8a"/><text x="13" y="20" font-size="12" font-weight="600" fill="#fff">2</text>')}</button><span class="end"></span></div>`);
</script>
</body>
</html>
